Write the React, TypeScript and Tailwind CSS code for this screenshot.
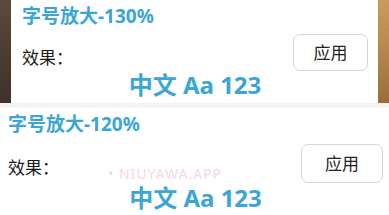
const font = { fontFamily: '"Noto Sans", "Noto Sans CJK SC", sans-serif' };

function ApplyButton({ className }: { className: string }) {
  return (
    <button
      className={`flex items-center justify-center rounded-[7px] border border-[#d6d6d6] bg-white text-[17px] text-[#222] ${className}`}
    >
      应用
    </button>
  );
}

export default function App() {
  return (
    <div className="w-[389px] h-[215px] overflow-hidden bg-white" style={font}>
      {/* top card, framed by the wallpaper behind it */}
      <div className="flex h-[103px]">
        <div className="w-[11px] bg-gradient-to-b from-[#5b4a3d] to-[#3f3128]" />
        <div className="flex-1 bg-white pt-[3px] pl-[11px] pr-[10px]">
          <div className="h-[26px] text-[19px] font-bold leading-[26px] text-[#3ba6d6]">
            字号放大-130%
          </div>
          <div className="flex items-start justify-between">
            <span className="mt-[19px] text-[17px] leading-[20px] text-[#1a1a1a]">效果：</span>
            <ApplyButton className="mt-[5px] h-[37px] w-[75px]" />
          </div>
          <div className="mt-[1px] text-center text-[24px] font-bold leading-[26px] text-[#3ba6d6]">
            中文 Aa 123
          </div>
        </div>
        <div className="w-[11px] bg-gradient-to-b from-[#c99c5c] via-[#b5874a] to-[#9a6e36]" />
      </div>

      <div className="h-[5px] bg-[#f3f3f3]" />

      {/* bottom card */}
      <div className="relative bg-white pt-[3px] pl-[8px] pr-[6px]">
        <div className="h-[26px] text-[19px] font-bold leading-[26px] text-[#3ba6d6]">
          字号放大-120%
        </div>
        <div className="flex items-start justify-between">
          <span className="mt-[21px] text-[17px] leading-[20px] text-[#1a1a1a]">效果：</span>
          <ApplyButton className="mt-[7px] h-[39px] w-[82px]" />
        </div>
        <div className="mt-[3px] text-center text-[24px] font-bold leading-[23px] text-[#3ba6d6]">
          中文 Aa 123
        </div>
        <div className="pointer-events-none absolute left-[108px] top-[60px] text-[14px] leading-[12px] tracking-[1px] text-[#f7d6ec]">
          • NIUYAWA.APP
        </div>
      </div>
    </div>
  );
}
